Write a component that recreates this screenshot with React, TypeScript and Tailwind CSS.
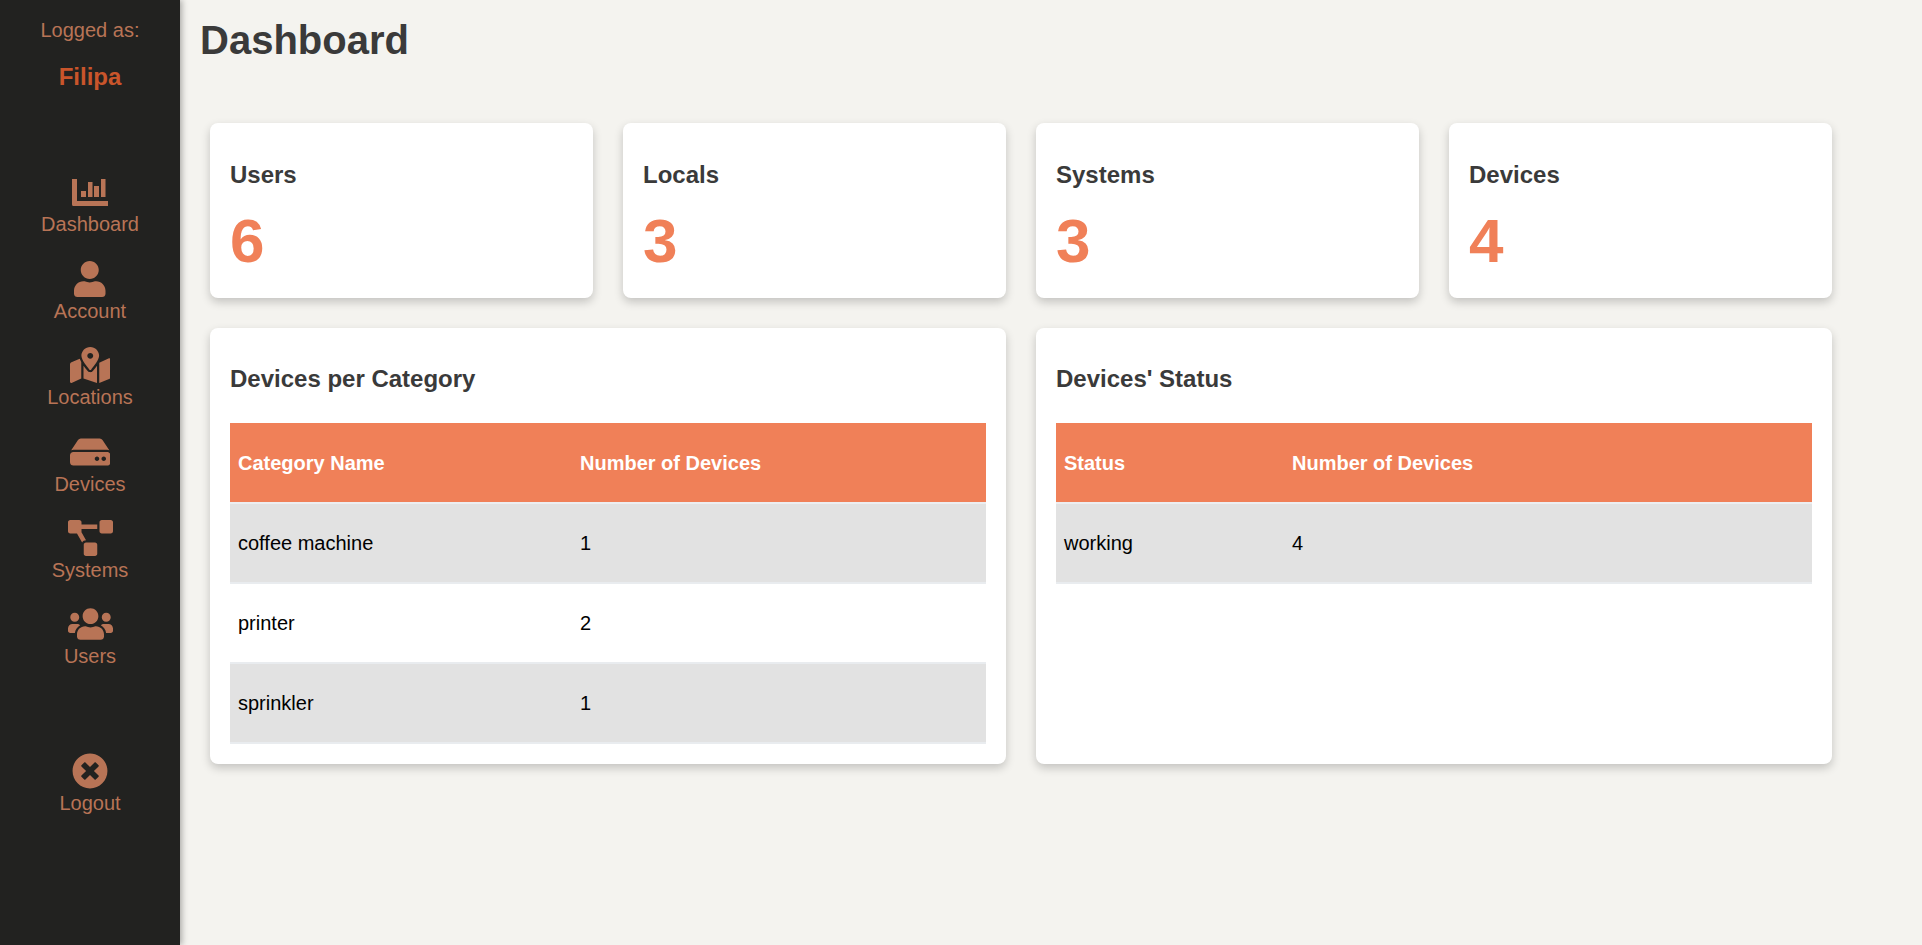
import { FaUser, FaMapMarkedAlt, FaHdd, FaProjectDiagram, FaUsers, FaTimesCircle } from "react-icons/fa";
import type { ReactNode } from "react";

function ChartIcon() {
  return (
    <svg viewBox="0 0 36 27" width="36" height="27" fill="currentColor">
      <path d="M0 0h5v22h31v5H1.5A1.5 1.5 0 0 1 0 25.5z" />
      <rect x="9" y="12" width="5" height="6" />
      <rect x="16" y="3" width="4.5" height="15" />
      <rect x="22" y="7" width="5" height="11" />
      <rect x="29" y="0" width="4.5" height="18" />
    </svg>
  );
}

function NavItem({ icon, label }: { icon: ReactNode; label: string }) {
  return (
    <a href="#" className="flex h-[86.4px] flex-col items-center justify-end text-[#b87456]">
      <span className="flex h-9 items-center justify-center">{icon}</span>
      <span className="pt-[3px] text-[20px] leading-[22px]">{label}</span>
    </a>
  );
}

function StatCard({ title, value }: { title: string; value: number }) {
  return (
    <div className="h-[175px] rounded-lg bg-white p-5 shadow-[0_4px_10px_rgba(0,0,0,0.2)]">
      <h3 className="mt-[18px] text-[24px] leading-7 font-bold text-[#3a3a3a]">{title}</h3>
      <p className="mt-[15px] text-[62px] leading-[74px] font-bold text-[#f08058]">{value}</p>
    </div>
  );
}

function TableCard({ title, firstCol, head, rows }: { title: string; firstCol: string; head: string; rows: [string, number][] }) {
  return (
    <div className="h-[436px] rounded-lg bg-white px-5 shadow-[0_4px_10px_rgba(0,0,0,0.2)]">
      <h3 className="pt-[37px] pb-[30px] text-[24px] leading-7 font-bold text-[#3a3a3a]">{title}</h3>
      <table className="w-full border-collapse text-left text-[20px]">
        <thead>
          <tr className="h-[80px] border-b-2 border-[#eceef1] bg-[#f08058] text-white">
            <th className={`${firstCol} px-2 font-bold`}>{head.split("|")[0]}</th>
            <th className="px-2 font-bold">{head.split("|")[1]}</th>
          </tr>
        </thead>
        <tbody>
          {rows.map(([name, count], i) => (
            <tr key={name} className={`h-[80px] border-b-2 border-[#e9ecef] text-black ${i % 2 === 0 ? "bg-[#e2e2e2]" : "bg-white"}`}>
              <td className="px-2">{name}</td>
              <td className="px-2">{count}</td>
            </tr>
          ))}
        </tbody>
      </table>
    </div>
  );
}

export default function App() {
  return (
    <div className="flex h-[945px] overflow-hidden bg-[#f4f3ef] font-['Liberation_Sans',Arial,sans-serif]">
      <aside className="z-10 flex w-[180px] shrink-0 flex-col items-stretch bg-[#222220] text-center shadow-[2px_0_6px_rgba(0,0,0,0.3)]">
        <p className="mt-[19px] text-[20px] leading-[22px] text-[#b87456]">Logged as:</p>
        <p className="mt-[23px] text-[24px] leading-[26px] font-bold text-[#c9552b]">Filipa</p>
        <nav className="mt-[59px] flex flex-col">
          <NavItem icon={<ChartIcon />} label="Dashboard" />
          <NavItem icon={<FaUser className="h-9 w-[31.5px]" />} label="Account" />
          <NavItem icon={<FaMapMarkedAlt className="h-9 w-[40.5px]" />} label="Locations" />
          <NavItem icon={<FaHdd className="h-9 w-[40.5px]" />} label="Devices" />
          <NavItem icon={<FaProjectDiagram className="h-9 w-[45px]" />} label="Systems" />
          <NavItem icon={<FaUsers className="h-9 w-[45px]" />} label="Users" />
        </nav>
        <div className="mt-[60px]">
          <NavItem icon={<FaTimesCircle className="h-9 w-9" />} label="Logout" />
        </div>
      </aside>
      <main className="flex-1 px-5">
        <h1 className="pt-[17px] text-[40px] leading-[46px] font-bold text-[#3a3a3a]">Dashboard</h1>
        <div className="mt-[60px] grid w-[1632px] grid-cols-4 gap-[30px] pl-[10px]">
          <StatCard title="Users" value={6} />
          <StatCard title="Locals" value={3} />
          <StatCard title="Systems" value={3} />
          <StatCard title="Devices" value={4} />
          <div className="col-span-2">
            <TableCard
              title="Devices per Category"
              firstCol="w-[342px]"
              head="Category Name|Number of Devices"
              rows={[["coffee machine", 1], ["printer", 2], ["sprinkler", 1]]}
            />
          </div>
          <div className="col-span-2">
            <TableCard title="Devices' Status" firstCol="w-[228px]" head="Status|Number of Devices" rows={[["working", 4]]} />
          </div>
        </div>
      </main>
    </div>
  );
}
